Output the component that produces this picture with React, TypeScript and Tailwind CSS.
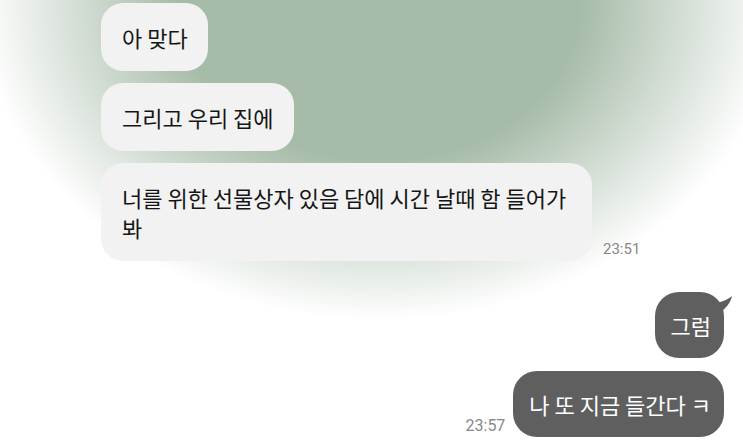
import type { ReactNode } from 'react'

const KR = "font-[family-name:'Noto_Sans_CJK_KR','Noto_Sans',sans-serif]"
const TIME = "font-[family-name:Roboto,'Liberation_Sans',sans-serif]"

const Incoming = ({ children, width }: { children: ReactNode; width?: string }) => (
  <div
    className={`rounded-[22px] bg-[#f2f2f2] py-[19px] pl-[21px] text-[22px] leading-[30px] text-[#151515] ${width ?? 'w-fit pr-5'}`}
  >
    {children}
  </div>
)

const Outgoing = ({ children, tail }: { children: ReactNode; tail?: boolean }) => (
  <div className="relative w-fit rounded-[24px] bg-[#5f5f5f] py-[18px] pl-[16px] pr-[13px] text-[22px] leading-[30px] text-white">
    {tail && (
      <svg
        className="absolute -right-[10px] top-[3px]"
        width="20"
        height="18"
        viewBox="0 0 20 18"
        fill="#5f5f5f"
      >
        <path d="M0 8 C6 8 13 5 18 1 C17 6 14 11 8 16 Z" />
      </svg>
    )}
    {children}
  </div>
)

export default function App() {
  return (
    <div
      className={`${KR} relative h-[446px] w-[743px] overflow-hidden bg-[radial-gradient(ellipse_400px_320px_at_380px_0px,#a6bba8_50%,#ffffff_100%)]`}
    >
      <div className="flex flex-col gap-3 pl-[101px] pt-[3px]">
        <Incoming>아 맞다</Incoming>
        <Incoming>그리고 우리 집에</Incoming>
        <div className="flex items-end gap-[11px]">
          <Incoming width="w-[491px] pr-[12px]">너를 위한 선물상자 있음 담에 시간 날때 함 들어가 봐</Incoming>
          <span className={`${TIME} pb-[2px] text-[15px] leading-[20px] text-[#888888]`}>23:51</span>
        </div>
      </div>

      <div className="mt-[31px] flex flex-col items-end gap-[13px] pr-[19px]">
        <Outgoing tail>그럼</Outgoing>
        <div className="flex items-end gap-2">
          <span className={`${TIME} pb-[1px] text-[16px] leading-[20px] text-[#888888]`}>23:57</span>
          <Outgoing>나 또 지금 들간다 ㅋ</Outgoing>
        </div>
      </div>
    </div>
  )
}
